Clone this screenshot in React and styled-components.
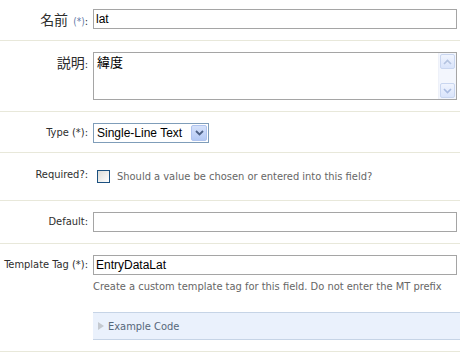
import React from "react";
import styled, { createGlobalStyle } from "styled-components";

const GlobalStyle = createGlobalStyle`
  body {
    margin: 0;
    background: #ffffff;
    font-family: "DejaVu Sans Condensed", "DejaVu Sans", sans-serif;
    font-size: 11px;
    color: #333;
  }
`;

const Form = styled.div`
  width: 460px;
  height: 360px;
  overflow: hidden;
`;

const Row = styled.div`
  display: grid;
  grid-template-columns: 88px 1fr;
  column-gap: 5px;
  padding: ${(p) => (p.first ? "9px" : "11px")} 3px ${(p) => p.bottom || "11px"} 0;
  border-bottom: 1px solid #e8e8da;
  align-items: start;
`;

const Label = styled.label`
  display: flex;
  justify-content: flex-end;
  align-items: baseline;
  height: ${(p) => p.lh || "20px"};
  line-height: ${(p) => p.lh || "20px"};
  white-space: pre;
  color: #2e2e2e;
  font-size: ${(p) => (p.cjk ? "14px" : "11px")};
  font-family: ${(p) =>
    p.cjk
      ? '"Noto Sans CJK JP", "DejaVu Sans Condensed", sans-serif'
      : '"DejaVu Sans Condensed", "DejaVu Sans", sans-serif'};
  & > span {
    line-height: 1;
  }
`;

const Req = styled.span`
  margin-left: ${(p) => (p.small ? "5px" : "0")};
  font-size: ${(p) => (p.small ? "10px" : "11px")};
  color: ${(p) => (p.small ? "#5f79a8" : "#2e2e2e")};
  font-family: "DejaVu Sans Condensed", sans-serif;
`;

const Colon = styled.span`
  font-size: 11px;
  font-family: "DejaVu Sans Condensed", sans-serif;
`;

const TextInput = styled.input`
  box-sizing: border-box;
  width: 100%;
  height: 20px;
  margin: 0;
  border: 1px solid #a5a5a5;
  padding: 0 2px;
  font-family: "Liberation Sans", Arial, sans-serif;
  font-size: 12px;
  color: #000;
  background: #fff;
  outline: none;
`;

const AreaWrap = styled.div`
  box-sizing: border-box;
  height: 48px;
  border: 1px solid #a5a5a5;
  display: flex;
  background: #fff;
`;

const Area = styled.textarea`
  flex: 1;
  border: 0;
  margin: 0;
  padding: 1px 3px;
  resize: none;
  overflow: hidden;
  font-family: "Noto Sans CJK JP", sans-serif;
  font-size: 13px;
  line-height: 16px;
  color: #000;
  outline: none;
`;

const ScrollBar = styled.div`
  width: 17px;
  background: #f3f6fd;
  border-left: 1px solid #eef1f9;
  display: flex;
  flex-direction: column;
  justify-content: space-between;
`;

const ScrollBtn = styled.div`
  box-sizing: border-box;
  height: 15px;
  margin: 1px;
  border: 1px solid #c9d6f0;
  border-radius: 2px;
  background: linear-gradient(#f0f4fe, #d9e4fb);
  display: flex;
  align-items: center;
  justify-content: center;
`;

const SelectBox = styled.div`
  box-sizing: border-box;
  width: 116px;
  height: 20px;
  border: 1px solid #7f9db9;
  display: flex;
  align-items: center;
  background: #fff;
`;

const SelectText = styled.span`
  flex: 1;
  padding-left: 3px;
  font-family: "Liberation Sans", Arial, sans-serif;
  font-size: 12px;
  color: #000;
`;

const SelectBtn = styled.div`
  box-sizing: border-box;
  width: 16px;
  height: 16px;
  margin-right: 1px;
  border: 1px solid #b0c4ef;
  border-radius: 2px;
  background: linear-gradient(#d6e2fb, #b4c9f4);
  display: flex;
  align-items: center;
  justify-content: center;
`;

const CheckLine = styled.div`
  display: flex;
  align-items: center;
  gap: 7px;
  padding-left: 4px;
  height: 25px;
  color: #666;
`;

const Check = styled.span`
  box-sizing: border-box;
  width: 13px;
  height: 13px;
  border: 1px solid #1c5180;
  background: linear-gradient(135deg, #dcdcd7, #ffffff);
`;

const Field = styled.div`
  display: flex;
  flex-direction: column;
`;

const Help = styled.div`
  margin-top: 5px;
  color: #666;
  line-height: 14px;
  white-space: nowrap;
`;

const Example = styled.div`
  margin-top: 18px;
  margin-right: -3px;
  height: 28px;
  box-sizing: border-box;
  background: #eaf1fc;
  border-top: 1px solid #c6d4e6;
  border-bottom: 1px solid #c6d4e6;
  display: flex;
  align-items: center;
  padding-left: 5px;
  gap: 4px;
  color: #56677a;
`;

const Arrow = ({ up }) => (
  <svg width="9" height="6" viewBox="0 0 9 6">
    <path
      d={up ? "M1 5 L4.5 1.5 L8 5" : "M1 1 L4.5 4.5 L8 1"}
      fill="none"
      stroke={up ? "#b4c3e0" : "#a9bbe0"}
      strokeWidth="1.6"
    />
  </svg>
);

export default function App() {
  return (
    <Form>
      <GlobalStyle />
      <Row first>
        <Label cjk>
          名前
          <Req small>(*)</Req>
          <Colon>:</Colon>
        </Label>
        <TextInput defaultValue="lat" />
      </Row>
      <Row>
        <Label cjk>
          説明<Colon>:</Colon>
        </Label>
        <AreaWrap>
          <Area defaultValue="緯度" />
          <ScrollBar>
            <ScrollBtn>
              <Arrow up />
            </ScrollBtn>
            <ScrollBtn>
              <Arrow />
            </ScrollBtn>
          </ScrollBar>
        </AreaWrap>
      </Row>
      <Row bottom="9px">
        <Label>
          Type <Req>(*)</Req>:
        </Label>
        <SelectBox>
          <SelectText>Single-Line Text</SelectText>
          <SelectBtn>
            <svg width="9" height="6" viewBox="0 0 9 6">
              <path d="M1 1 L4.5 4.5 L8 1" fill="none" stroke="#4d6185" strokeWidth="1.8" />
            </svg>
          </SelectBtn>
        </SelectBox>
      </Row>
      <Row>
        <Label lh="22px">Required?:</Label>
        <CheckLine>
          <Check />
          <span>Should a value be chosen or entered into this field?</span>
        </CheckLine>
      </Row>
      <Row>
        <Label>Default:</Label>
        <TextInput defaultValue="" />
      </Row>
      <Row>
        <Label>
          Template Tag <Req>(*)</Req>:
        </Label>
        <Field>
          <TextInput defaultValue="EntryDataLat" />
          <Help>Create a custom template tag for this field. Do not enter the MT prefix</Help>
          <Example>
            <svg width="6" height="8" viewBox="0 0 6 8">
              <path d="M0 0 L6 4 L0 8 Z" fill="#c4c9d0" />
            </svg>
            <span>Example Code</span>
          </Example>
        </Field>
      </Row>
    </Form>
  );
}
